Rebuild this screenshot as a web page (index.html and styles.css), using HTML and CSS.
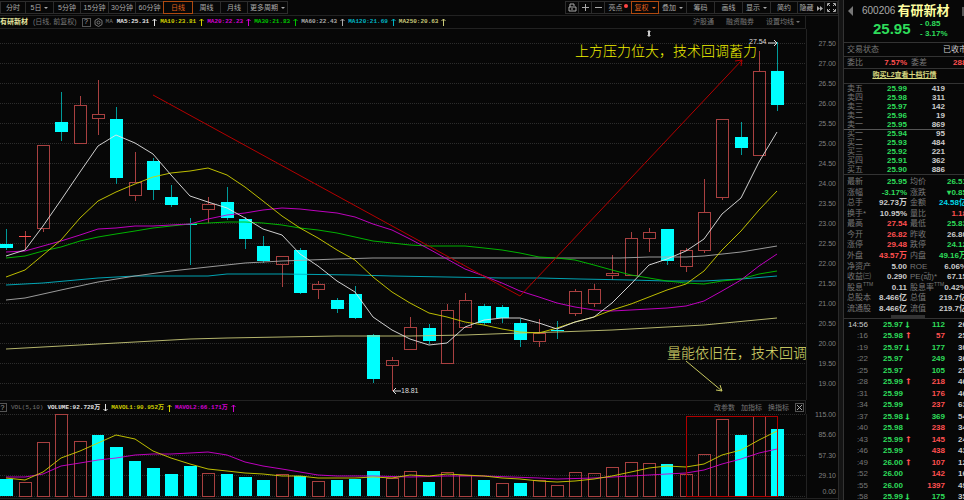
FILE: index.html
```html
<!DOCTYPE html>
<html lang="zh-CN">
<head>
    <meta charset="utf-8">
    <meta name="viewport" content="width=device-width, initial-scale=1">
    <title>有研新材 600206</title>
    <link rel="stylesheet" href="styles.css">
</head>
<body>

<div class="app">
    <main class="main">
        <nav class="toolbar">
            <div class="periods">
                <button type="button" class="btn">分时</button>
                <button type="button" class="btn">5日 <i class="caret"></i></button>
                <button type="button" class="btn">5分钟</button>
                <button type="button" class="btn">15分钟</button>
                <button type="button" class="btn">30分钟</button>
                <button type="button" class="btn">60分钟</button>
                <button type="button" class="btn active">日线</button>
                <button type="button" class="btn">周线</button>
                <button type="button" class="btn">月线</button>
                <button type="button" class="btn wide">更多周期 <i class="caret"></i></button>
            </div>
            <div class="tools">
                <button type="button" class="btn icon" aria-label="锁定">
                    <svg width="9" height="9" viewBox="0 0 9 9"><path d="M1 4h7v4H1zM2 4V1h4v2M4 5v2"/></svg>
                </button>
                <button type="button" class="btn icon" aria-label="放大">
                    <svg width="9" height="9" viewBox="0 0 9 9"><path d="M1 4.5h7M4.5 1v7"/></svg>
                </button>
                <button type="button" class="btn icon" aria-label="缩小">
                    <svg width="9" height="9" viewBox="0 0 9 9"><path d="M1 4.5h7"/></svg>
                </button>
                <button type="button" class="btn">亮点<i class="dot"></i></button>
                <button type="button" class="btn active">复权 <i class="caret"></i></button>
                <button type="button" class="btn mid">叠加 <i class="caret"></i></button>
                <button type="button" class="btn mid">筹码</button>
                <button type="button" class="btn mid">画线</button>
                <button type="button" class="btn mid">显示 <i class="caret"></i></button>
                <button type="button" class="btn">简约</button>
                <button type="button" class="btn">隐藏
                    <svg width="6" height="5" viewBox="0 0 6 5"><path class="solid" d="M0 0l3 2.500-3 2.500zM3 0l3 2.500-3 2.500z"/></svg>
                </button>
                <button type="button" class="btn icon" aria-label="全屏">
                    <svg width="9" height="9" viewBox="0 0 9 9"><path d="M.5 3V.5H3M6 .5h2.500V3M8.500 6v2.500H6M3 8.500H.5V6M1 1l2 2M8 1L6 3M8 8L6 6M1 8l2-2"/></svg>
                </button>
            </div>
        </nav>

        <div class="legend">
            <span class="stock">有研新材</span>
            <span class="mode">(日线, 前复权)</span>
            <button type="button" class="help">?</button>
            <svg class="gear" width="9" height="9" viewBox="0 0 9 9"><path d="M4.500.5l3.500 2v4l-3.500 2-3.500-2v-4z"/><circle cx="4.500" cy="4.500" r="1.500"/></svg>
            <span class="ma mode">MA</span>
            <span class="ma c-white">MA5:25.31<svg class="arrow" viewBox="0 0 5 8"><path d="M2.500 8V1M.5 3l2-2 2 2"/></svg></span>
            <span class="ma c-yellow">MA10:23.81<svg class="arrow" viewBox="0 0 5 8"><path d="M2.500 8V1M.5 3l2-2 2 2"/></svg></span>
            <span class="ma c-magenta">MA20:22.23<svg class="arrow" viewBox="0 0 5 8"><path d="M2.500 8V1M.5 3l2-2 2 2"/></svg></span>
            <span class="ma c-green">MA30:21.83<svg class="arrow" viewBox="0 0 5 8"><path d="M2.500 8V1M.5 3l2-2 2 2"/></svg></span>
            <span class="ma c-gray">MA60:22.43<svg class="arrow" viewBox="0 0 5 8"><path d="M2.500 8V1M.5 3l2-2 2 2"/></svg></span>
            <span class="ma c-cyan">MA120:21.69<svg class="arrow" viewBox="0 0 5 8"><path d="M2.500 8V1M.5 3l2-2 2 2"/></svg></span>
            <span class="ma c-khaki">MA250:20.63<svg class="arrow" viewBox="0 0 5 8"><path d="M2.500 8V1M.5 3l2-2 2 2"/></svg></span>
            <div class="links">
                <a href="#">沪股通</a>
                <a href="#">融资融券</a>
                <a href="#">设置均线 <i class="caret"></i></a>
            </div>
        </div>

        <!-- 日K线 -->
        <svg class="chart" viewBox="0 29 838 371">
            <path class="grid" d="M0 43H806M0 63H806M0 83H806M0 103H806M0 123H806M0 143H806M0 163H806M0 183H806M0 203H806M0 223H806M0 243H806M0 263H806M0 283H806M0 303H806M0 323H806M0 343H806M0 363H806M0 383H806"/>
            <path class="frame" d="M806 29V400M838 29V400"/>

            <g class="axis">
                <text x="836" y="46">27.50</text>
                <text x="836" y="66">27.00</text>
                <text x="836" y="86">26.50</text>
                <text x="836" y="106">26.00</text>
                <text x="836" y="126">25.50</text>
                <text x="836" y="146">25.00</text>
                <text x="836" y="166">24.50</text>
                <text x="836" y="186">24.00</text>
                <text x="836" y="206">23.50</text>
                <text x="836" y="226">23.00</text>
                <text x="836" y="246">22.50</text>
                <text x="836" y="266">22.00</text>
                <text x="836" y="286">21.50</text>
                <text x="836" y="306">21.00</text>
                <text x="836" y="326">20.50</text>
                <text x="836" y="346">20.00</text>
                <text x="836" y="366">19.50</text>
                <text x="836" y="386">19.00</text>
            </g>

            <path class="up" d="M25 231V250M19 236H31
                M37 145h12v83h-12zM43 228V232
                M74 105h12v38h-12zM80 96V105
                M92 114h12v4h-12zM98 80V114M98 118V135
                M129 182h12v13h-12zM135 152V182M135 195V201
                M202 204h12v5h-12zM208 197V204M208 209V223
                M276 256h12v8h-12zM282 264V287
                M312 284h12v5h-12zM318 281V284M318 289V299
                M386 360h12v5h-12zM392 357V360M392 365V391
                M404 327h12v22h-12zM410 317V327
                M441 310h12v53h-12zM447 304V310
                M459 300h12v27h-12zM465 293V300
                M533 333h12v8h-12zM539 319V333M539 341V347
                M569 291h12v22h-12zM575 289V291M575 313V316
                M588 289h12v14h-12zM594 284V289M594 303V307
                M606 273h12v2h-12zM612 255V273M612 275V280
                M625 238h12v37h-12zM631 232V238
                M643 232h12v6h-12zM649 228V232M649 238V252
                M680 250h12v16h-12zM686 248V250M686 266V272
                M698 212h12v38h-12zM704 179V212M704 250V253
                M716 119h12v78h-12zM722 197V200
                M753 71h12v84h-12zM759 51V71"/>
            <path class="doji" d="M19 236H31"/>
            <path class="wick" d="M6 229V250M61 92V141M116 107V184M153 158V200M171 185V207M190 218V265M227 187V220M245 217V249M263 236V263M300 248V294M337 298V313M355 286V319M373 334V383M429 324V344M484 304V325M502 305V323M520 319V347M557 321V339M667 229V265M741 122V155M777 42V111"/>
            <path class="down" d="M0 244h13v4H0zM55 122h13v10h-13zM110 119h13v59h-13zM147 161h13v29h-13zM165 197h13v8h-13zM184 224h13v1h-13zM221 202h13v16h-13zM239 219h13v20h-13zM257 246h13v15h-13zM294 250h13v43h-13zM331 300h13v9h-13zM349 294h13v24h-13zM367 335h13v44h-13zM423 328h13v13h-13zM478 306h13v17h-13zM496 307h13v11h-13zM514 323h13v17h-13zM551 330h13v1h-13zM661 229h13v32h-13zM735 137h13v11h-13zM771 71h13v34h-13z"/>

            <polyline class="line c-khaki" points="6,349 43,347 98,344 135,342 190,339 227,338 282,337 337,336 410,336 465,335 520,333 557,332 612,330 667,327 704,325 777,318"/>
            <polyline class="line c-cyan" points="6,285 43,283 98,278 135,276 190,276 208,276 227,274 282,274 355,275 392,276 502,278 540,278 580,279 631,280 667,281 704,281 741,279 777,276"/>
            <polyline class="line c-gray" points="6,300 25,298 43,294 61,290 98,282 135,276 171,271 208,267 245,263 282,261 337,259 373,258 465,258 484,258 539,258 620,258 649,257 686,257 704,256 741,252 759,249 777,246"/>
            <polyline class="line c-green" points="6,258 25,256 43,251 61,247 80,241 98,237 116,234 135,231 153,228 171,226 190,224 208,223 227,222 245,222 263,223 282,225 300,228 318,230 337,233 355,237 373,241 392,243 410,245 429,246 465,246 484,248 502,250 520,253 539,257 557,258 575,260 594,265 612,270 631,275 649,278 667,281 686,283 704,284 722,281 741,279 759,274 777,271"/>
            <polyline class="line c-magenta" points="6,252 25,251 43,246 61,241 80,235 98,229 116,228 135,226 153,226 171,225 190,224 208,219 227,215 245,213 263,210 282,208 300,209 318,211 337,213 355,217 373,224 392,230 410,239 429,249 447,259 465,269 484,276 502,283 520,291 539,297 557,303 575,307 594,310 612,311 631,310 649,309 667,308 686,306 704,301 722,291 741,280 759,266 777,254"/>
            <polyline class="line c-yellow" points="6,277 25,270 43,255 61,240 80,218 98,201 116,192 135,184 153,177 171,173 190,171 208,168 227,175 245,187 263,201 282,216 300,228 318,238 337,250 355,260 373,277 392,292 410,303 429,313 447,317 465,322 484,325 502,329 520,332 539,333 557,328 575,322 594,317 612,310 631,304 649,297 667,290 686,284 704,271 722,250 741,231 759,210 777,191"/>
            <polyline class="line c-white" points="6,256 25,250 43,226 61,200 80,172 98,146 116,135 135,143 153,154 171,175 190,196 208,202 227,208 245,218 263,229 282,235 300,254 318,266 337,281 355,292 373,317 392,330 410,339 429,345 447,343 465,327 484,320 502,318 520,318 539,323 557,329 575,322 594,317 612,303 631,284 649,265 667,259 686,251 704,239 722,214 741,198 759,162 777,132"/>

            <path class="trend" d="M153 95L520 296L742 60M735 61L742 60L741 66"/>
            <path class="hint" d="M686 361L722 391M716 390L722 391L720 385"/>
            <text class="note" x="575" y="56">上方压力位大，技术回调蓄力</text>
            <svg x="0" y="330" width="806" height="60" viewBox="0 330 806 60">
                <text class="note pale" x="667" y="358">量能依旧在，技术回调</text>
            </svg>

            <path class="mark" d="M768 43H777M774 40L777 43L774 46M393 391H401M396 388L393 391L396 394"/>
            <text class="price" x="749" y="44">27.54</text>
            <text class="price" x="401" y="393">18.81</text>
            <path class="cursor" d="M649 30l2 2h-1v3h1l-2 2-2-2h1v-3h-1z"/>
        </svg>

        <div class="legend volume">
            <button type="button" class="help">?</button>
            <span class="ma mode">VOL(5,10)</span>
            <span class="ma c-white">VOLUME:92.728万<svg class="arrow" viewBox="0 0 5 8"><path d="M2.500 0V7M.5 5l2 2 2-2"/></svg></span>
            <span class="ma c-yellow">MAVOL1:90.952万<svg class="arrow" viewBox="0 0 5 8"><path d="M2.500 8V1M.5 3l2-2 2 2"/></svg></span>
            <span class="ma c-magenta">MAVOL2:66.171万<svg class="arrow" viewBox="0 0 5 8"><path d="M2.500 8V1M.5 3l2-2 2 2"/></svg></span>
            <div class="links">
                <a href="#">改参数</a>
                <a href="#">加指标</a>
                <a href="#">换指标</a>
                <button type="button" class="help" aria-label="关闭">
                    <svg width="5" height="5" viewBox="0 0 5 5"><path d="M0 0l5 5M5 0L0 5"/></svg>
                </button>
            </div>
        </div>

        <!-- 成交量 -->
        <svg class="chart" viewBox="0 414 838 86">
            <path class="grid" d="M0 414H806M0 434H806M0 455H806M0 475H806M0 496H806"/>
            <path class="frame" d="M806 414V498M838 414V498M0 498H838"/>
            <g class="axis">
                <text x="836" y="417">115.00</text>
                <text x="836" y="437">85.60</text>
                <text x="836" y="458">57.30</text>
                <text x="836" y="478">29.10</text>
                <text x="836" y="494">0.00</text>
            </g>
            <path class="up" d="M19 496V482h12V496zM37 496V442h12V496zM55 496V414h12V496zM74 496V441h12V496zM202 496V473h12V496zM276 496V474h12V496zM312 496V481h12V496zM386 496V478h12V496zM404 496V471h12V496zM441 496V472h12V496zM459 496V475h12V496zM496 496V483h12V496zM533 496V480h12V496zM551 496V485h12V496zM569 496V472h12V496zM588 496V473h12V496zM606 496V467h12V496zM625 496V462h12V496zM643 496V463h12V496zM680 496V474h12V496zM698 496V454h12V496zM716 496V419h12V496zM753 496V416h12V496z"/>
            <path class="down" d="M0 496V479h13V496zM92 496V435h12V496zM110 496V447h13V496zM129 496V461h12V496zM147 496V468h13V496zM165 496V474h13V496zM184 496V466h13V496zM221 496V474h12V496zM239 496V477h13V496zM257 496V480h13V496zM294 496V476h12V496zM331 496V480h12V496zM349 496V479h12V496zM367 496V471h13V496zM423 496V482h12V496zM478 496V480h12V496zM514 496V483h13V496zM661 496V464h12V496zM735 496V435h12V496zM771 496V429h13V496z"/>
            <polyline class="line c-magenta" points="6,477 25,477 43,474 61,466 80,463 98,460 116,458 135,455 153,454 171,454 190,453 208,452 227,455 245,462 263,466 282,469 300,472 318,475 337,476 373,476 410,477 447,476 484,476 539,478 557,479 594,478 631,476 667,474 686,473 704,470 722,464 741,459 759,453 777,449"/>
            <polyline class="line c-yellow" points="6,478 25,480 43,472 61,458 80,451 98,443 116,435 135,439 153,451 171,458 190,464 208,469 227,471 245,473 263,474 282,476 300,476 318,478 337,478 355,478 373,477 392,478 410,475 429,476 447,474 465,475 484,476 502,478 520,479 539,481 557,482 575,481 594,479 612,476 631,472 649,468 667,466 686,467 704,464 722,455 741,450 759,440 777,431"/>
            <path class="box" d="M686 496V416H777V496z"/>
        </svg>
    </main>

    <div class="splitter"></div>

    <aside class="side">
        <div class="side-body">
            <header class="quote">
                <div class="title">
                    <i class="prev"></i>
                    <span class="code">600206</span>
                    <h1 class="name">有研新材</h1>
                    <i class="next"></i>
                </div>
                <div class="last">
                    <strong class="now">25.95</strong>
                    <div class="change"><span>- 0.85</span><span>- 3.17%</span></div>
                </div>
            </header>

            <div class="status"><span>交易状态</span><span class="w">已收市</span></div>
            <div class="status ratio">
                <span>委比</span><b class="r">7.57%</b><span>委差</span><b class="r diff">288</b>
            </div>
            <div class="promo"><a href="#">购买L2查看十档行情</a></div>

            <table class="levels">
                <tr><th>卖五</th><td class="g">25.99</td><td>419</td></tr>
                <tr><th>卖四</th><td class="g">25.98</td><td>311</td></tr>
                <tr><th>卖三</th><td class="g">25.97</td><td>142</td></tr>
                <tr><th>卖二</th><td class="g">25.96</td><td>19</td></tr>
                <tr><th>卖一</th><td class="g">25.95</td><td>869</td></tr>
            </table>
            <table class="levels buy">
                <tr><th>买一</th><td class="g">25.94</td><td>95</td></tr>
                <tr><th>买二</th><td class="g">25.93</td><td>484</td></tr>
                <tr><th>买三</th><td class="g">25.92</td><td>221</td></tr>
                <tr><th>买四</th><td class="g">25.91</td><td>362</td></tr>
                <tr><th>买五</th><td class="g">25.90</td><td>886</td></tr>
            </table>

            <div class="facts-box">
                <table class="facts">
                    <tr><th>最新</th><td class="g">25.95</td><th>均价</th><td class="g">26.51</td></tr>
                    <tr><th>涨幅</th><td class="g">-3.17%</td><th>涨跌</th><td class="g">▾0.85</td></tr>
                    <tr><th>总手</th><td>92.73万</td><th>金额</th><td class="c">24.58亿</td></tr>
                    <tr><th>换手*</th><td>10.95%</td><th>量比</th><td class="r">1.18</td></tr>
                    <tr><th>最高</th><td class="r">27.54</td><th>最低</th><td class="g">25.83</td></tr>
                    <tr><th>今开</th><td class="r">26.82</td><th>昨收</th><td>26.80</td></tr>
                    <tr><th>涨停</th><td class="r">29.48</td><th>跌停</th><td class="g">24.12</td></tr>
                    <tr><th>外盘</th><td class="r">43.57万</td><th>内盘</th><td class="g">49.16万</td></tr>
                    <tr><th>净资产</th><td>5.00</td><th>ROE</th><td>6.06%</td></tr>
                    <tr><th>收益㈢</th><td>0.290</td><th>PE(动)*</th><td>67.15</td></tr>
                    <tr><th>股息<sup>TTM</sup></th><td>0.11</td><th>股息率<sup>TTM</sup></th><td>0.42%</td></tr>
                    <tr><th>总股本</th><td>8.466亿</td><th>总值</th><td>219.7亿</td></tr>
                    <tr><th>流通股</th><td>8.466亿</td><th>流值</th><td>219.7亿</td></tr>
                </table>
            </div>

            <div class="handle"><i class="grip"></i></div>

            <table class="ticks">
                <tr><th class="w">14:56</th><td class="g">25.97</td><td class="g dir">⭣</td><td class="g">112</td><td>26</td></tr>
                <tr><th>:16</th><td class="g">25.98</td><td class="r dir">⭡</td><td class="r">57</td><td>25</td></tr>
                <tr><th>:19</th><td class="g">25.97</td><td class="g dir">⭣</td><td class="g">177</td><td>30</td></tr>
                <tr><th>:22</th><td class="g">25.97</td><td></td><td class="g">249</td><td>36</td></tr>
                <tr><th>:25</th><td class="g">25.97</td><td></td><td class="g">105</td><td>25</td></tr>
                <tr><th>:28</th><td class="g">25.99</td><td class="r dir">⭡</td><td class="r">218</td><td>46</td></tr>
                <tr><th>:31</th><td class="g">25.99</td><td></td><td class="r">176</td><td>46</td></tr>
                <tr><th>:34</th><td class="g">25.99</td><td></td><td class="r">237</td><td>63</td></tr>
                <tr><th>:37</th><td class="g">25.98</td><td class="g dir">⭣</td><td class="g">369</td><td>54</td></tr>
                <tr><th>:40</th><td class="g">25.98</td><td></td><td class="r">238</td><td>34</td></tr>
                <tr><th>:43</th><td class="g">25.99</td><td class="r dir">⭡</td><td class="r">145</td><td>24</td></tr>
                <tr><th>:46</th><td class="g">25.99</td><td></td><td class="r">438</td><td>43</td></tr>
                <tr><th>:49</th><td class="g">26.00</td><td class="r dir">⭡</td><td class="r">107</td><td>12</td></tr>
                <tr><th>:52</th><td class="g">26.00</td><td></td><td class="r">142</td><td>16</td></tr>
                <tr><th>:55</th><td class="g">26.00</td><td></td><td class="r">1397</td><td>49</td></tr>
                <tr><th>:58</th><td class="g">25.99</td><td class="g dir">⭣</td><td class="g">175</td><td>35</td></tr>
            </table>
        </div>
    </aside>
</div>

</body>
</html>
```
FILE: styles.css
```css
* {
    margin: 0;
    padding: 0;
    box-sizing: border-box;
}
body {
    background: #070707;
    color: #999;
    font: 7px/8px "Liberation Sans", "Noto Sans CJK SC", sans-serif;
    overflow: hidden;
}
button {
    font: inherit;
    color: inherit;
    background: none;
    border: 1px solid #333;
    white-space: nowrap;
    cursor: pointer;
}
a {
    color: inherit;
    text-decoration: none;
}
svg {
    fill: none;
    stroke: currentColor;
}
.app {
    display: flex;
    height: 100vh;
}
.main {
    flex: 1;
    min-width: 0;
}

/* toolbar */
.toolbar {
    display: flex;
    justify-content: space-between;
    height: 16px;
    padding: 1px 0;
    border-bottom: 1px solid #222;
    color: #aaa;
}
.periods, .tools {
    display: flex;
}
.btn {
    display: flex;
    align-items: center;
    justify-content: center;
    gap: 3px;
    width: 28px;
    margin-left: -1px;
    padding-top: 1px;
    border-color: #2c2c2c;
}
.periods .btn:nth-child(even), .mid {
    width: 29px;
}
.periods .btn:first-child {
    width: 26px;
    margin-left: 0;
}
.periods .active {
    width: 30px;
}
.periods .wide:nth-child(even) {
    width: 41px;
}
.icon {
    width: 14px;
    padding-top: 0;
}
.btn.active {
    color: #e0601a;
    border-color: #b04a10;
    z-index: 1;
}
.solid {
    fill: currentColor;
    stroke: none;
}
.caret {
    display: inline-block;
    border: 2px solid transparent;
    border-top-color: currentColor;
    border-bottom: 0;
    vertical-align: middle;
}
.dot {
    width: 4px;
    height: 4px;
    margin: -5px 0 0 -2px;
    border-radius: 50%;
    background: #f44;
}

/* indicator legends */
.legend {
    display: flex;
    align-items: center;
    height: 13px;
    margin-right: 32px;
    border-bottom: 1px solid #222;
    border-right: 1px solid #222;
    white-space: nowrap;
}
.stock {
    margin-right: 5px;
    color: #e8e8a0;
    font-weight: bold;
}
.mode {
    margin-right: 5px;
    color: #777;
}
.help {
    display: flex;
    align-items: center;
    justify-content: center;
    width: 9px;
    height: 9px;
    border-color: #555;
    color: #aaa;
}
.gear {
    margin: 0 3px;
    color: #777;
}
.ma {
    display: flex;
    align-items: center;
    margin-right: 3px;
    font: bold 6px/8px "Liberation Mono", "Noto Sans CJK SC", monospace;
}
.ma.mode {
    margin-right: 4px;
    font-weight: normal;
}
.arrow {
    width: 5px;
    height: 8px;
    margin-left: 3px;
}
.links {
    display: flex;
    align-items: center;
    gap: 12px;
    margin-left: auto;
    margin-right: 5px;
    color: #777;
}
.volume {
    height: 14px;
    border-top: 1px solid #222;
    border-bottom: 0;
}
.volume .help {
    margin-left: -2px;
    margin-right: 4px;
}
.volume .links {
    gap: 6px;
    margin-right: 0;
}
.volume .links .help {
    margin: 0 1px 0 0;
}
.c-white { color: #e4e4e4; }
.c-yellow { color: #d0d000; }
.c-magenta { color: #d000d0; }
.c-green { color: #00c400; }
.c-gray { color: #aaa; }
.c-cyan { color: #00b4c4; }
.c-khaki { color: #c8c878; }

/* charts */
.chart {
    display: block;
    width: 100%;
    overflow: visible;
}
.grid {
    stroke: #2c2c2c;
    stroke-dasharray: 1 1;
    shape-rendering: crispEdges;
}
.frame {
    stroke: #222;
    shape-rendering: crispEdges;
}
.axis text {
    fill: #808080;
    stroke: none;
    text-anchor: end;
}
.up {
    stroke: #a84040;
    shape-rendering: crispEdges;
}
.doji {
    stroke: #ff5050;
    shape-rendering: crispEdges;
}
.wick {
    stroke: #009a9a;
    shape-rendering: crispEdges;
}
.down {
    fill: #00ffff;
    stroke: none;
}
.line {
    opacity: 0.9;
}
.trend {
    stroke: #b40000;
}
.box {
    stroke: #b00000;
    shape-rendering: crispEdges;
}
.hint {
    stroke: #c8c860;
}
.note {
    fill: #f0f000;
    stroke: none;
    font-size: 14px;
    font-weight: 300;
}
.pale {
    fill: #e0e070;
}
.mark {
    stroke: #ddd;
}
.price {
    fill: #ddd;
    stroke: none;
}
.cursor {
    fill: #ccc;
    stroke: none;
}

/* splitter */
.splitter {
    flex: 0 0 6px;
    background: #141414;
    border-left: 1px solid #2a2a2a;
    border-right: 1px solid #333;
}

/* quote panel */
.side {
    flex: 0 0 120px;
    overflow: hidden;
    font-size: 8px;
    color: #777;
}
.side-body {
    width: 123px;
}
.quote {
    height: 43px;
    padding: 3px 0 0 4px;
    border-bottom: 1px solid #333;
}
.title {
    display: flex;
    align-items: center;
    height: 16px;
    white-space: nowrap;
}
.prev {
    width: 5px;
    border: 5px solid transparent;
    border-right-color: #777;
    border-left: 0;
}
.next {
    width: 5px;
    height: 9px;
    margin-left: auto;
    background: #555;
}
.code {
    margin: 0 2px 0 9px;
    font-size: 10px;
    color: #aaa;
}
.name {
    font-size: 13px;
    line-height: 16px;
    color: #ffffa0;
}
.last {
    display: flex;
    align-items: center;
    height: 20px;
    padding-left: 25px;
    color: #2edc5a;
}
.now {
    width: 47px;
    font-size: 15px;
}
.change {
    display: flex;
    flex-direction: column;
    gap: 2px;
    font-weight: bold;
}
.status {
    display: flex;
    justify-content: space-between;
    align-items: center;
    height: 14px;
    padding-left: 3px;
    border-bottom: 1px solid #333;
    white-space: nowrap;
}
.ratio {
    height: 12px;
    justify-content: flex-start;
}
.ratio b {
    width: 44px;
    margin-right: 4px;
    text-align: right;
}
.ratio .diff {
    width: auto;
    margin: 0 0 0 26px;
}
.promo {
    height: 15px;
    padding-right: 2px;
    border-bottom: 1px solid #333;
    text-align: center;
    font: bold 7px/12px "Liberation Sans", "Noto Sans CJK SC", sans-serif;
    color: #d8d880;
}
.promo a {
    text-decoration: underline;
}
.w { color: #ccc; }
.g { color: #2edc5a; }
.r { color: #ff5050; }
.c { color: #00d8e8; }
table {
    width: 100%;
    border-collapse: collapse;
    table-layout: fixed;
}
th {
    font-weight: normal;
    text-align: left;
    white-space: nowrap;
}
td {
    font-weight: bold;
    text-align: right;
    white-space: nowrap;
}
td:not([class]) {
    color: #ccc;
}
.levels {
    width: 101px;
    height: 45px;
}
.levels th, .facts th {
    padding-left: 3px;
}
.levels th {
    width: 24px;
}
.levels td:last-child {
    width: 38px;
}
.buy {
    border-top: 1px solid #555;
}
.facts-box {
    padding-top: 2px;
    border-top: 1px solid #333;
}
.facts {
    height: 137px;
}
.facts th:nth-child(1) {
    width: 26px;
}
.facts td:nth-child(2) {
    width: 37px;
}
.facts th:nth-child(3) {
    width: 26px;
}
.facts sup {
    font-size: 5px;
    line-height: 1px;
}
.handle {
    height: 5px;
    padding-top: 1px;
    border-bottom: 1px solid #333;
}
.grip {
    display: block;
    width: 34px;
    height: 3px;
    margin-left: 47px;
    background: #333;
}
.ticks {
    height: 184px;
}
.ticks th {
    width: 24px;
    text-align: right;
}
.ticks td:nth-child(2) {
    width: 35px;
}
.ticks td:nth-child(3) {
    width: 7px;
}
.ticks td:nth-child(4) {
    width: 35px;
}
```
